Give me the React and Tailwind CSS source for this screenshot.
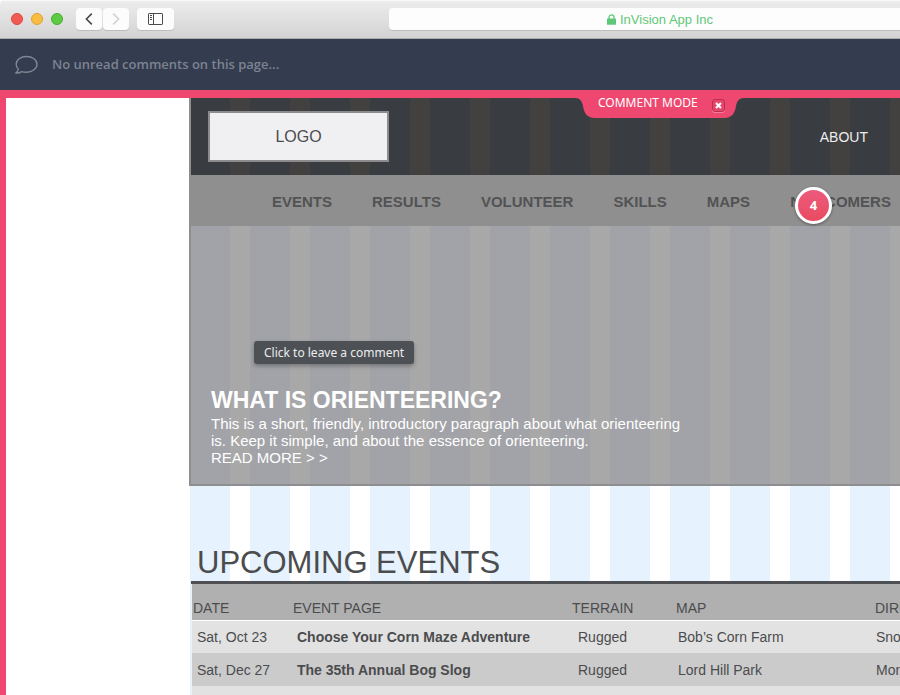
const navItems = ["EVENTS", "RESULTS", "VOLUNTEER", "SKILLS", "MAPS", "NEWCOMERS"];

const events = [
  { date: "Sat, Oct 23", name: "Choose Your Corn Maze Adventure", terrain: "Rugged", map: "Bob’s Corn Farm", directions: "Snohomish" },
  { date: "Sat, Dec 27", name: "The 35th Annual Bog Slog", terrain: "Rugged", map: "Lord Hill Park", directions: "Monroe" },
];

function BrowserBar() {
  const button = "flex h-[22px] items-center justify-center rounded bg-[#fcfcfc] shadow-[0_1px_0_#bdbdbd]";
  return (
    <header className="flex h-[39px] items-center overflow-hidden rounded-tl border-b border-[#a9abae] bg-linear-to-b from-[#ededed] to-[#d3d3d3] pl-[11px] shadow-[inset_0_1px_0_#f8f8f8]">
      <div className="flex gap-2">
        <button aria-label="Close window" className="size-3 rounded-full border border-[#dd4640] bg-[#f25a54]" />
        <button aria-label="Minimize window" className="size-3 rounded-full border border-[#dfa033] bg-[#fabd3f]" />
        <button aria-label="Zoom window" className="size-3 rounded-full border border-[#47ad33] bg-[#5ccb42]" />
      </div>
      <div className="ml-[13px] flex gap-px">
        <button aria-label="Back" className={`${button} w-[26px]`}>
          <svg width="8" height="12" viewBox="0 0 8 12" fill="none" stroke="#4a4a4a" strokeWidth="1.6"><path d="M6.8 .6 1.4 6l5.4 5.4" /></svg>
        </button>
        <button aria-label="Forward" className={`${button} w-[26px]`}>
          <svg width="8" height="12" viewBox="0 0 8 12" fill="none" stroke="#d2d2d2" strokeWidth="1.6"><path d="M1.2 .6 6.6 6l-5.4 5.4" /></svg>
        </button>
      </div>
      <button aria-label="Show sidebar" className={`${button} ml-2 w-[37px]`}>
        <svg width="15" height="12" viewBox="0 0 15 12" fill="none" stroke="#4a4a4a">
          <rect x=".5" y=".5" width="14" height="11" rx=".6" />
          <path d="M5.5 .5v11M2 2.5h2M2 4.5h2M2 6.5h2" />
        </svg>
      </button>
      <div className="-mr-8 ml-[215px] flex h-[22px] flex-1 items-center justify-center gap-1 rounded bg-[#fdfdfd] pl-[2px] shadow-[0_1px_0_#bdbdbd]">
        <svg width="9" height="11" viewBox="0 0 9 11" className="shrink-0">
          <path d="M2 5V3.4a2.5 2.5 0 0 1 5 0V5" fill="none" stroke="#5fc878" strokeWidth="1.3" />
          <rect x="0" y="4.6" width="9" height="6.2" rx=".6" fill="#5fc878" />
        </svg>
        <input aria-label="Address" readOnly value="InVision App Inc" className="w-24 bg-transparent pt-px text-[13px] text-[#5fc878] outline-none" />
      </div>
    </header>
  );
}

function CommentBar() {
  return (
    <div className="flex h-[51px] items-center gap-[14px] bg-[#343c4f] pl-[14px]">
      <svg width="24" height="20" viewBox="0 0 24 20" fill="none" stroke="#7f8794" strokeWidth="1.4" strokeLinejoin="round">
        <path d="M12.5 1.5C6.6 1.5 2.2 4.900 2.200 9.200c0 2.300 .9 3.700 2.100 4.900-.3 1.500-1.100 2.800-2.500 3.900 2.300.2 4.300-.3 5.700-1.400 1.500.4 3.200.6 5 .6 5.900 0 10.500-3.700 10.500-8S18.400 1.500 12.500 1.500Z" />
      </svg>
      <p className="font-['Open_Sans','Noto_Sans',sans-serif] text-[13px] font-semibold text-[#7c8391]">No unread comments on this page...</p>
    </div>
  );
}

function CommentModeTab() {
  return (
    <div className="absolute right-[156px] top-0 z-10 h-7 w-[169px]">
      <svg width="169" height="20" viewBox="0 0 169 20" className="absolute bottom-0 left-0" fill="#ef4870" aria-hidden="true">
        <path d="M0 0C5 0 7 3 8 8C9 15 12 20 20 20H149C157 20 160 15 161 8C162 3 164 0 169 0Z" />
      </svg>
      <div className="relative flex items-center gap-[14px] pl-[23px] pt-1">
        <span className="font-['Noto_Sans',sans-serif] text-xs leading-[18px] text-white">COMMENT MODE</span>
        <button aria-label="Exit comment mode" className="mt-1 flex size-[13px] items-center justify-center rounded-[3px] border border-[#bd2f50] bg-[#e4466b] shadow-[0_1px_0_#f47f9a]">
          <svg width="7" height="7" viewBox="0 0 7 7" stroke="white" strokeWidth="2"><path d="M1 1l5 5M6 1 1 6" /></svg>
        </button>
      </div>
    </div>
  );
}

function EventTable() {
  const cell = "pl-[5px] text-left";
  return (
    <table className="w-[850px] table-fixed border-collapse text-sm text-[#4b4c4e]">
      <colgroup>
        <col className="w-[100px]" />
        <col className="w-[279px]" />
        <col className="w-[104px]" />
        <col className="w-[199px]" />
        <col />
      </colgroup>
      <thead>
        <tr className="h-9 bg-[#b0b0b0]">
          {["DATE", "EVENT PAGE", "TERRAIN", "MAP", "DIRECTIONS"].map((h) => (
            <th key={h} scope="col" className="pl-px pt-3 text-left font-normal">{h}</th>
          ))}
        </tr>
      </thead>
      <tbody>
        {events.map((e) => (
          <tr key={e.name} className="h-[33px] odd:border-t odd:border-white odd:bg-[#e2e2e2] even:bg-[#cbcbcb]">
            <td className={cell}>{e.date}</td>
            <td className={cell}><a href="#event" className="font-bold">{e.name}</a></td>
            <td className="pl-[7px] text-left">{e.terrain}</td>
            <td className="pl-[3px] text-left">{e.map}</td>
            <td className="pl-[2px] text-left">{e.directions}</td>
          </tr>
        ))}
      </tbody>
    </table>
  );
}

export default function App() {
  return (
    <div className="flex min-h-screen flex-col overflow-hidden bg-white font-['Liberation_Sans',Arial,sans-serif]">
      <BrowserBar />
      <CommentBar />
      <main className="relative flex flex-1 flex-col border-l-[6px] border-t-8 border-[#ef4870]">
        <div className="absolute inset-x-0 -top-2">
          <CommentModeTab />
        </div>
        <div className="ml-[183px] flex flex-1 flex-col overflow-hidden bg-[linear-gradient(90deg,#e6f2fd_40px,#ffffff_40px)] bg-size-[60px_100%] bg-position-[1px_0]">
          <section className="border-b-2 border-l-2 border-[#8e8e90]">
            <div className="flex h-[77px] items-start justify-between bg-[linear-gradient(90deg,#393d41_40px,#424140_40px)] bg-size-[60px_100%] bg-position-[-1px_0] pl-[17px] pr-8 pt-[13px]">
              <a href="#home" className="flex h-[51px] w-[181px] items-center justify-center border-2 border-[#8c8c8e] bg-[#f0f0f2] pt-px text-base text-[#4b4c4e]">LOGO</a>
              <a href="#about" className="pt-4 text-sm text-[#ededed]">ABOUT</a>
            </div>
            <nav className="flex h-[51px] items-center gap-10 bg-[#8f8f8f] pl-[81px] pt-1 text-[15px] font-bold text-[#525354]">
              {navItems.map((item) => (
                <a key={item} href="#nav">{item}</a>
              ))}
            </nav>
            <div className="bg-[linear-gradient(90deg,#a2a3a8_40px,#a8a8a8_40px)] bg-size-[60px_100%] bg-position-[-1px_0] pb-[18px] pl-5 pt-[160px] text-white">
              <h1 className="text-[23px] leading-[29px] font-bold">WHAT IS ORIENTEERING?</h1>
              <p className="max-w-[480px] text-[15px] leading-[17px]">
                This is a short, friendly, introductory paragraph about what orienteering is. Keep it simple, and about the essence of orienteering.
              </p>
              <a href="#more" className="block text-[15px] leading-[17px]">READ MORE &gt; &gt;</a>
            </div>
          </section>
          <h2 className="ml-[2px] border-b-[3px] border-[#4f5053] pl-[6px] pt-[58px] text-[31px] leading-[37px] text-[#4b4c4e]">UPCOMING EVENTS</h2>
          <div className="ml-[3px] flex flex-1 flex-col">
            <EventTable />
            <div className="min-h-2 flex-1 bg-[#e2e2e2]" />
          </div>
        </div>
        <button aria-label="Comment thread 4" className="absolute right-[68px] top-[89px] flex size-[37px] items-center justify-center rounded-full border-[3px] border-white bg-linear-to-b from-[#ec5a7c] to-[#e94b60] font-['Open_Sans',sans-serif] text-[13px] font-bold text-white shadow-[0_1px_3px_rgba(0,0,0,0.4)]">4</button>
        <div role="tooltip" className="absolute left-[248px] top-[243px] rounded-[3px] bg-[#4d5156] px-[10px] font-['Noto_Sans',sans-serif] text-xs leading-[23px] text-[#ececec] shadow-[0_2px_4px_rgba(0,0,0,0.3)]">Click to leave a comment</div>
      </main>
    </div>
  );
}
